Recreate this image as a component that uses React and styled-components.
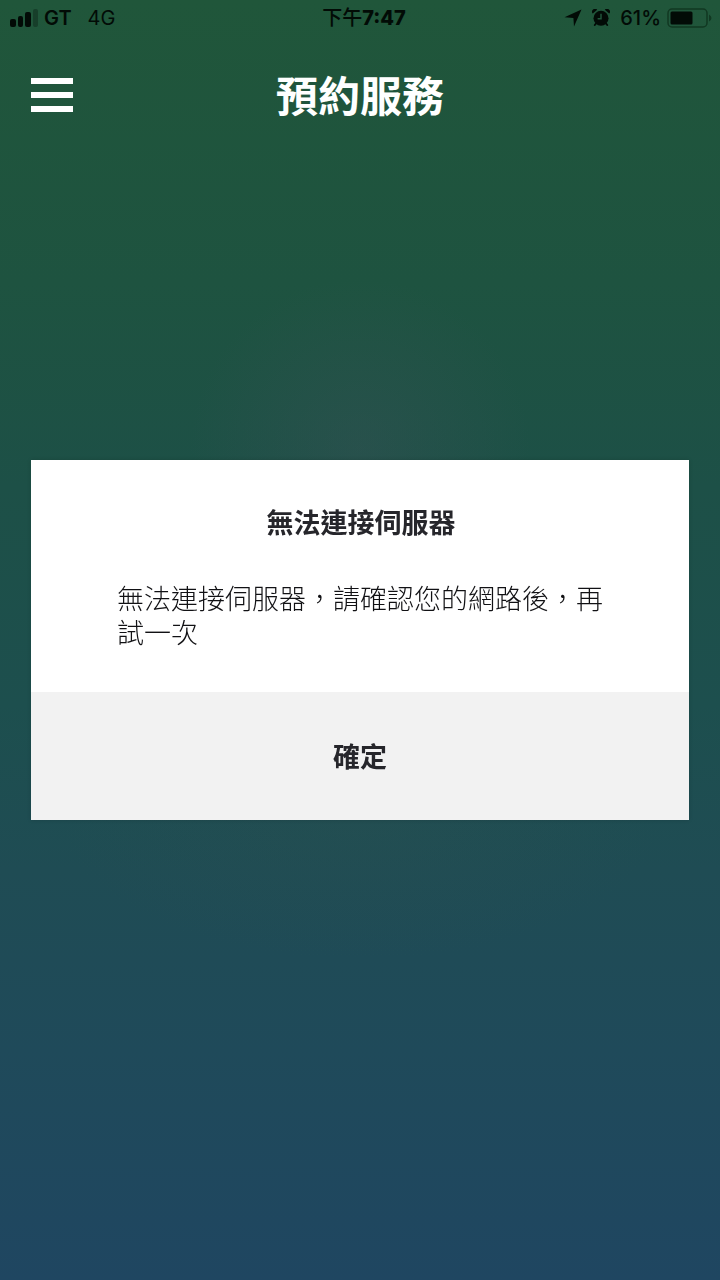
import React, { useState } from 'react';
import styled, { createGlobalStyle } from 'styled-components';

const GlobalStyle = createGlobalStyle`
    * {
        box-sizing: border-box;
    }
    body {
        margin: 0;
        font-family: "Noto Sans CJK TC", sans-serif;
    }
    button {
        font-family: inherit;
        border: none;
        padding: 0;
        cursor: pointer;
    }
`
const Screen = styled.div`
    min-height: 100vh;
    background:
        radial-gradient(circle at 50% 35%, rgba(62, 82, 90, 0.32), rgba(62, 82, 90, 0) 170px),
        radial-gradient(ellipse 300px 140px at 50% 64%, rgba(44, 80, 80, 0.3), rgba(44, 80, 80, 0)),
        linear-gradient(#20563a 0%, #1e5340 22%, #1d5047 38%, #1d4f4e 55%, #1f4c54 68%, #1f4a5a 82%, #1f4661 100%);
`
const StatusBar = styled.div`
    display: grid;
    grid-template-columns: 1fr auto 1fr;
    align-items: center;
    height: 36px;
    padding: 0 8px 0 10px;
    font-family: Inter, "Noto Sans CJK TC", sans-serif;
    font-size: 20px;
    line-height: 24px;
    color: #020b06;
`
const StatusGroup = styled.div`
    display: flex;
    align-items: center;
    justify-content: ${props => props.$end ? "flex-end" : "flex-start"};
    gap: ${props => props.$end ? "10px" : "6px"};
`
const Carrier = styled.span`
    font-weight: 600;
`
const Network = styled.span`
    margin-left: 10px;
`
const Time = styled.time`
    font-weight: 500;
    padding-left: 6px;
`
const Digits = styled.span`
    font-weight: 800;
`
const Battery = styled.span`
    display: flex;
    align-items: center;
    gap: 6px;
    font-weight: 500;
`
const Header = styled.header`
    display: grid;
    grid-template-columns: 42px 1fr 42px;
    align-items: center;
    height: 117px;
    padding: 0 31px;
`
const MenuButton = styled.button`
    display: flex;
    flex-direction: column;
    gap: 8px;
    background: none;
`
const MenuLine = styled.span`
    width: 42px;
    height: 6px;
    background-color: white;
`
const PageTitle = styled.h1`
    margin: 0;
    padding-bottom: 2px;
    font-size: 42px;
    line-height: 60px;
    font-weight: 700;
    text-align: center;
    color: white;
`
const Overlay = styled.div`
    position: fixed;
    inset: 0;
    display: flex;
    align-items: center;
    padding: 0 31px;
`
const Dialog = styled.section`
    flex: 1;
    background-color: white;
    box-shadow: 0 0 4px rgba(0, 0, 0, 0.15);
    color: #26262b;
`
const DialogBody = styled.div`
    display: flex;
    flex-direction: column;
    gap: 42px;
    padding: 45px 84px 43px 86px;
`
const DialogTitle = styled.h2`
    margin: 0;
    font-size: 27px;
    line-height: 34px;
    font-weight: 700;
    text-align: center;
`
const Message = styled.p`
    margin: 0;
    font-size: 27px;
    line-height: 34px;
    font-weight: 300;
    color: #111114;
`
const ConfirmButton = styled.button`
    display: block;
    width: 100%;
    height: 128px;
    background-color: #f2f2f2;
    color: #26262b;
    font-size: 27px;
    line-height: 34px;
    font-weight: 700;
`

const SignalIcon = () => (
    <svg width="28" height="18" viewBox="0 0 28 18" fill="#020b06" aria-hidden="true">
        <rect x="0" y="10" width="6" height="8" rx="2"/>
        <rect x="8" y="7" width="5" height="11" rx="2"/>
        <rect x="15" y="3" width="6" height="15" rx="2"/>
        <rect x="23" y="0" width="5" height="18" rx="2" opacity="0.3"/>
    </svg>
)

const LocationIcon = () => (
    <svg width="18" height="18" viewBox="0 0 18 18" fill="#020b06" aria-hidden="true">
        <path d="M17.5 0.5 L10 17.5 L9.4 9 L0.5 8.2 Z"/>
    </svg>
)

// the clock hands are cut in the bar colour
const AlarmIcon = () => (
    <svg width="18" height="18" viewBox="0 0 18 18" fill="none" aria-hidden="true">
        <path d="M0.8 4.6 A2.8 2.8 0 0 1 5.2 0.8 Z M17.2 4.6 A2.8 2.8 0 0 0 12.8 0.8 Z" fill="#020b06"/>
        <path d="M4 14.5 L2.8 16 M14 14.5 L15.2 16" stroke="#020b06" strokeWidth="2" strokeLinecap="round"/>
        <circle cx="9" cy="9.2" r="7.5" fill="#020b06"/>
        <path d="M9 4.8 V9.8 H5.6" stroke="#20563b" strokeWidth="1.5"/>
    </svg>
)

const BatteryIcon = () => (
    <svg width="45" height="20" viewBox="0 0 45 20" aria-hidden="true">
        <rect x="1" y="1" width="39" height="18" rx="4" fill="none" stroke="#113822" strokeWidth="1.5"/>
        <rect x="3.5" y="3.5" width="22" height="13" rx="1.5" fill="#020b06"/>
        <path d="M42 6.5 Q44.5 8 44.5 10 Q44.5 12 42 13.5 Z" fill="#113822"/>
    </svg>
)

const App = () => {
    const [ showDialog, toggleDialog ] = useState(true);

    return (
        <Screen>
            <GlobalStyle/>
            <StatusBar>
                <StatusGroup>
                    <SignalIcon/>
                    <Carrier>GT</Carrier>
                    <Network>4G</Network>
                </StatusGroup>
                <Time>下午<Digits>7:47</Digits></Time>
                <StatusGroup $end>
                    <LocationIcon/>
                    <AlarmIcon/>
                    <Battery>61%<BatteryIcon/></Battery>
                </StatusGroup>
            </StatusBar>
            <Header>
                <MenuButton aria-label="選單">
                    <MenuLine/>
                    <MenuLine/>
                    <MenuLine/>
                </MenuButton>
                <PageTitle lang="zh-TW">預約服務</PageTitle>
            </Header>
            {showDialog &&
                <Overlay>
                    <Dialog role="alertdialog" aria-labelledby="dialogTitle" aria-describedby="dialogMessage" lang="zh-TW">
                        <DialogBody>
                            <DialogTitle id="dialogTitle">無法連接伺服器</DialogTitle>
                            <Message id="dialogMessage">無法連接伺服器，請確認您的網路後，再試一次</Message>
                        </DialogBody>
                        <ConfirmButton onClick={() => toggleDialog(false)}>確定</ConfirmButton>
                    </Dialog>
                </Overlay>
            }
        </Screen>
    )
}

export default App;
